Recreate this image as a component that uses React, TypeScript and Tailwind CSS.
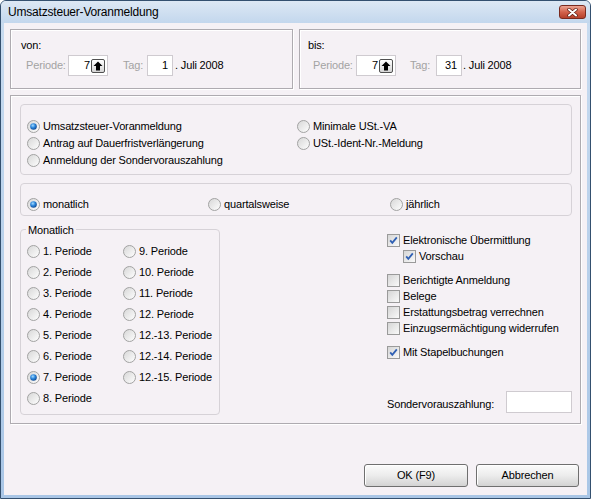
import React from "react";

// Classic dialog: "Umsatzsteuer-Voranmeldung"

const etched =
  "border border-[#aeabb0] shadow-[inset_1px_1px_0_#ffffff,1px_1px_0_#ffffff]";
const groupBox = "border border-[#d6d2d7] rounded-[4px]";

function Radio({ checked, label }: { checked?: boolean; label: string }) {
  return (
    <div className="flex items-center h-full">
      <svg width="13" height="13" viewBox="0 0 13 13" className="shrink-0">
        <defs>
          <linearGradient id="radio-bg" x1="0" y1="0" x2="1" y2="1">
            <stop offset="0" stopColor="#d6d6d6" />
            <stop offset="1" stopColor="#ffffff" />
          </linearGradient>
          <radialGradient id="radio-dot" cx="0.4" cy="0.35" r="0.75">
            <stop offset="0" stopColor="#a6dcff" />
            <stop offset="0.45" stopColor="#2a86dc" />
            <stop offset="1" stopColor="#0a3a80" />
          </radialGradient>
        </defs>
        <circle cx="6.5" cy="6.5" r="6" fill="url(#radio-bg)" stroke="#a2a2a2" />
        {checked && <circle cx="6.5" cy="6.5" r="3.3" fill="url(#radio-dot)" />}
      </svg>
      <span className="ml-[3px] whitespace-nowrap">{label}</span>
    </div>
  );
}

function Check({ checked, label }: { checked?: boolean; label: string }) {
  return (
    <div className="flex items-center h-[16px]">
      <svg width="13" height="13" viewBox="0 0 13 13" className="shrink-0">
        <defs>
          <linearGradient id="check-bg" x1="0" y1="0" x2="1" y2="1">
            <stop offset="0" stopColor="#d4d4d4" />
            <stop offset="1" stopColor="#fbfbfb" />
          </linearGradient>
        </defs>
        <rect x="0.5" y="0.5" width="12" height="12" fill="url(#check-bg)" stroke="#9a9a9a" />
        {checked && (
          <path d="M3.2 6.4 L5.3 8.8 L9.8 3.4" fill="none" stroke="#3060b4" strokeWidth="1.8" />
        )}
      </svg>
      <span className="ml-[3px] whitespace-nowrap">{label}</span>
    </div>
  );
}

function SpinField({ value }: { value: string }) {
  return (
    <div className="w-[40px] h-[21px] bg-white border border-[#cfcbd0] flex items-center justify-end pr-[2px]">
      <span>{value}</span>
      <div className="ml-[1px] w-[14px] h-[14px] rounded-[2px] border border-[#505050] bg-gradient-to-b from-[#ffffff] to-[#d6d6d6] flex items-center justify-center">
        <svg width="10" height="10" viewBox="0 0 10 10">
          <path d="M5 0.5 L9.5 5 L7 5 L7 9.5 L3 9.5 L3 5 L0.5 5 Z" fill="#000" />
        </svg>
      </div>
    </div>
  );
}

function DayField({ value, w }: { value: string; w: string }) {
  return (
    <div className={`${w} h-[21px] bg-white border border-[#cfcbd0] flex items-center justify-end pr-[4px]`}>
      {value}
    </div>
  );
}

function Button({ label, w }: { label: string; w: string }) {
  return (
    <div
      className={`${w} h-[23px] rounded-[3px] border border-[#6f6f6f] bg-gradient-to-b from-[#fbfbfb] via-[#ececec] to-[#d3d3d3] shadow-[inset_1px_1px_0_#ffffff] flex items-center justify-center`}
    >
      {label}
    </div>
  );
}

export default function App() {
  return (
    <div className="w-[591px] h-[499px] flex flex-col bg-gradient-to-b from-[#c9dcf0] to-[#a9c6e6] border border-[#34506f] rounded-t-[6px] overflow-hidden font-['Liberation_Sans',Tahoma,Arial,sans-serif] text-[11px] leading-[13px] tracking-[-0.15px] text-black">
      {/* Title bar */}
      <div className="h-[22px] shrink-0 flex items-center pl-[7px] pr-[4px] bg-gradient-to-b from-[#dde8f4] to-[#c3d7ed]">
        <span className="text-[12px] leading-[14px] tracking-[-0.2px]">Umsatzsteuer-Voranmeldung</span>
        <div className="ml-auto w-[27px] h-[14px] rounded-[3px] border border-[#7a2a1e] bg-gradient-to-b from-[#eba493] via-[#d3624b] to-[#b5402a] flex items-center justify-center">
          <svg width="11" height="9" viewBox="0 0 11 9">
            <path d="M2 1.5 L9 7.5 M9 1.5 L2 7.5" stroke="#5a1a10" strokeWidth="3.4" strokeLinecap="round" />
            <path d="M2 1.5 L9 7.5 M9 1.5 L2 7.5" stroke="#ffffff" strokeWidth="2" strokeLinecap="round" />
          </svg>
        </div>
      </div>

      {/* Body */}
      <div className="mx-[3px] mb-[3px] flex-1 bg-[#f5f1f5] pt-[6px] px-[6px] flex flex-col">
        {/* von / bis */}
        <div className="flex gap-[6px] h-[60px]">
          <div className={`w-[283px] ${etched} pl-[10px] pt-[9px]`}>
            <div>von:</div>
            <div className="mt-[3px] h-[21px] flex items-center pl-[5px]">
              <span className="w-[42px] text-[#a3a3a3]">Periode:</span>
              <SpinField value="7" />
              <span className="ml-[15px] w-[24px] text-[#a3a3a3]">Tag:</span>
              <DayField value="1" w="w-[26px]" />
              <span className="ml-[2px]">. Juli 2008</span>
            </div>
          </div>
          <div className={`flex-1 ${etched} pl-[8px] pt-[9px]`}>
            <div>bis:</div>
            <div className="mt-[3px] h-[21px] flex items-center pl-[5px]">
              <span className="w-[43px] text-[#a3a3a3]">Periode:</span>
              <SpinField value="7" />
              <span className="ml-[14px] w-[26px] text-[#a3a3a3]">Tag:</span>
              <DayField value="31" w="w-[26px]" />
              <span className="ml-[1px]">. Juli 2008</span>
            </div>
          </div>
        </div>

        {/* Main panel */}
        <div className={`mt-[6px] h-[329px] ${etched} pt-[8px] pl-[9px] pr-[8px] flex flex-col`}>
          <div className={`h-[71px] ${groupBox} pt-[13px] pl-[6px] grid grid-cols-[270px_1fr] grid-rows-[17px_17px_17px]`}>
            <Radio checked label="Umsatzsteuer-Voranmeldung" />
            <Radio label="Minimale USt.-VA" />
            <Radio label="Antrag auf Dauerfristverlängerung" />
            <Radio label="USt.-Ident-Nr.-Meldung" />
            <Radio label="Anmeldung der Sondervorauszahlung" />
          </div>

          <div className={`mt-[8px] h-[33px] ${groupBox} pt-[12px] pl-[6px] flex`}>
            <div className="w-[181px] h-[17px]">
              <Radio checked label="monatlich" />
            </div>
            <div className="w-[182px] h-[17px]">
              <Radio label="quartalsweise" />
            </div>
            <div className="h-[17px]">
              <Radio label="jährlich" />
            </div>
          </div>

          <div className="mt-[13px] flex items-start">
            {/* Monatlich */}
            <div className={`w-[200px] h-[186px] ${groupBox}`}>
              <div className="-mt-[6px] ml-[5px] px-[2px] w-fit bg-[#f5f1f5]">Monatlich</div>
              <div className="mt-[4px] pl-[6px] flex">
                <div className="w-[96px] flex flex-col">
                  {[1, 2, 3, 4, 5, 6, 7, 8].map((n) => (
                    <div key={n} className="h-[21px]">
                      <Radio checked={n === 7} label={`${n}. Periode`} />
                    </div>
                  ))}
                </div>
                <div className="flex flex-col">
                  {["9.", "10.", "11.", "12.", "12.-13.", "12.-14.", "12.-15."].map((p) => (
                    <div key={p} className="h-[21px]">
                      <Radio label={`${p} Periode`} />
                    </div>
                  ))}
                </div>
              </div>
            </div>

            {/* Options */}
            <div className="ml-[167px] mt-[3px] flex-1 flex flex-col">
              <Check checked label="Elektronische Übermittlung" />
              <div className="pl-[16px]">
                <Check checked label="Vorschau" />
              </div>
              <div className="mt-[8px]">
                <Check label="Berichtigte Anmeldung" />
                <Check label="Belege" />
                <Check label="Erstattungsbetrag verrechnen" />
                <Check label="Einzugsermächtigung widerrufen" />
              </div>
              <div className="mt-[8px]">
                <Check checked label="Mit Stapelbuchungen" />
              </div>
              <div className="mt-[31px] flex items-end h-[22px]">
                <span className="pb-[2px]">Sondervorauszahlung:</span>
                <div className="ml-auto w-[66px] h-[22px] bg-white border border-[#cfcbd0]" />
              </div>
            </div>
          </div>
        </div>

        {/* Buttons */}
        <div className="mt-[40px] mr-[2px] flex justify-end gap-[8px]">
          <Button label="OK (F9)" w="w-[104px]" />
          <Button label="Abbrechen" w="w-[103px]" />
        </div>
      </div>
    </div>
  );
}
